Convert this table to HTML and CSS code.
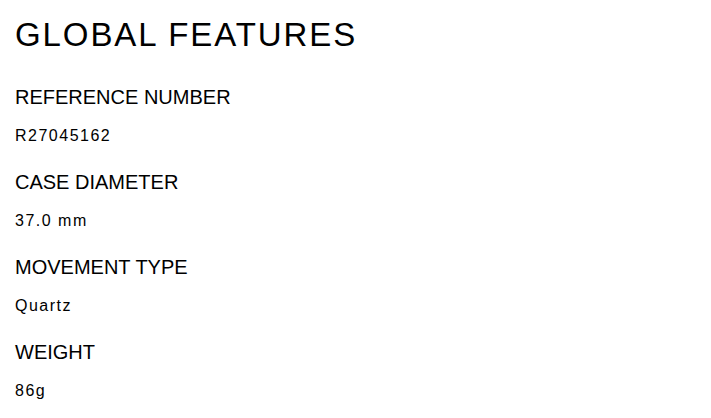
FILE: index.html
```html
<!DOCTYPE html>
<html lang="en">
<head>
<meta charset="utf-8">
<title>Global Features</title>
<link rel="stylesheet" href="styles.css">
</head>
<body>
<section class="features">
  <h1 class="features-title">GLOBAL FEATURES</h1>
  <dl class="features-list">
    <div class="feature">
      <dt class="feature-label">REFERENCE NUMBER</dt>
      <dd class="feature-value">R27045162</dd>
    </div>
    <div class="feature">
      <dt class="feature-label">CASE DIAMETER</dt>
      <dd class="feature-value">37.0 mm</dd>
    </div>
    <div class="feature">
      <dt class="feature-label">MOVEMENT TYPE</dt>
      <dd class="feature-value">Quartz</dd>
    </div>
    <div class="feature">
      <dt class="feature-label">WEIGHT</dt>
      <dd class="feature-value">86g</dd>
    </div>
  </dl>
</section>
</body>
</html>
```
FILE: styles.css
```css
html, body {
  margin: 0;
  padding: 0;
  background: #fff;
  color: #000;
  font-family: "Liberation Sans", Arial, sans-serif;
}

.features {
  padding: 15px 15px 0 15px;
}

.features-title {
  margin: 0;
  font-size: 33px;
  line-height: 40px;
  font-weight: normal;
  letter-spacing: 1.9px;
}

.features-list {
  margin: 30px 0 0 0;
  display: flex;
  flex-direction: column;
  gap: 24px;
}

.feature {
  display: flex;
  flex-direction: column;
  gap: 17px;
}

.feature-label {
  margin: 0;
  font-size: 20px;
  line-height: 24px;
  letter-spacing: 0;
}

.feature-value {
  margin: 0;
  font-size: 16px;
  line-height: 20px;
  letter-spacing: 1.5px;
}
```
